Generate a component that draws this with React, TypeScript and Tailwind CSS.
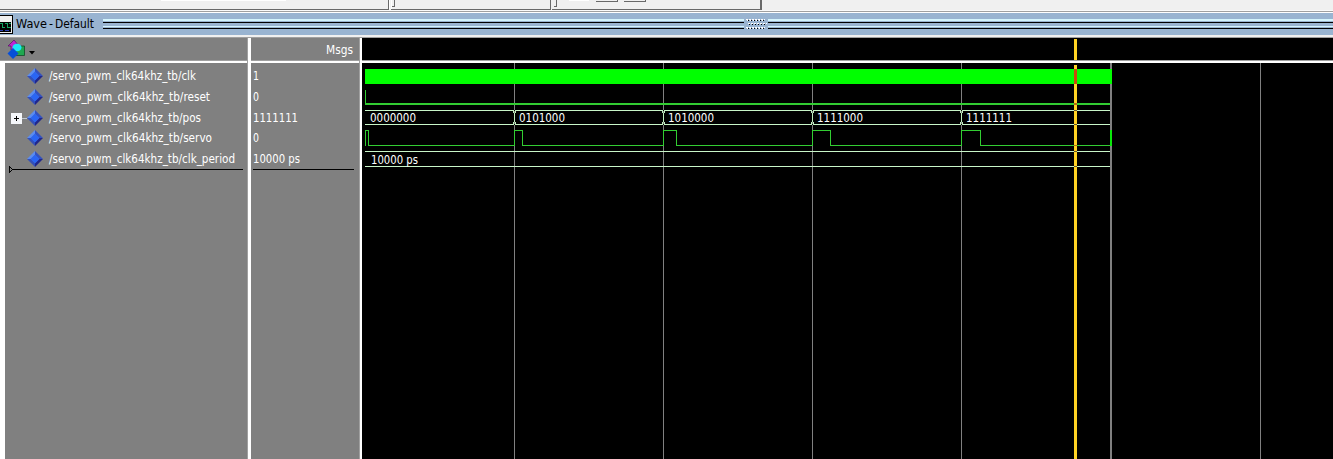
import React from "react";

const SIGNALS = [
  { name: "/servo_pwm_clk64khz_tb/clk", value: "1", nameW: 147, valueW: 6 },
  { name: "/servo_pwm_clk64khz_tb/reset", value: "0", nameW: 161, valueW: 6 },
  { name: "/servo_pwm_clk64khz_tb/pos", value: "1111111", nameW: 152, valueW: 45, bus: true },
  { name: "/servo_pwm_clk64khz_tb/servo", value: "0", nameW: 163, valueW: 6 },
  { name: "/servo_pwm_clk64khz_tb/clk_period", value: "10000 ps", nameW: 186, valueW: 47 },
];

function Label({ text, width, size = 12.5, fill = "#fff" }: { text: string; width: number; size?: number; fill?: string }) {
  return (
    <svg width={width + 2} height="18" className="block shrink-0 overflow-visible">
      <text x="0" y="13" fontSize={size} fill={fill} textLength={width} lengthAdjust="spacingAndGlyphs">{text}</text>
    </svg>
  );
}

function Diamond() {
  return (
    <svg width="16" height="16" viewBox="0 0 16 16" className="block shrink-0">
      <path d="M8 0L0 8h4l4-4z" fill="#5b8cf0" />
      <path d="M8 0l8 8h-4L8 4z" fill="#3451bd" />
      <path d="M0 8l8 8v-4L4 8z" fill="#3450b8" />
      <path d="M16 8l-8 8v-4l4-4z" fill="#20278c" />
      <path d="M8 3.500L12.500 8 8 12.500 3.500 8z" fill="#2a65f4" />
    </svg>
  );
}

function Toolbar() {
  return (
    <svg width="1333" height="13" className="block shrink-0" shapeRendering="crispEdges">
      <rect width="1333" height="13" fill="#f0f0f0" />
      <path d="M161 0h125v1h-125zM569 0h20v1h-20zM389 0h1v9h-1zM391 0h1v9h-1z" fill="#fff" />
      <path d="M0 9h388V0h1v10H0zM391 9h159V0h1v10H391zM552 9h208V0h2v10H552zM392 6h2V0h1v7h-3zM554 6h2V0h1v7h-3zM596 1h21V0h1v2h-22zM624 1h21V0h1v2h-22z" fill="#696969" />
      <rect y="10" width="1333" height="1" fill="#fafafa" />
      <rect y="11" width="1333" height="1" fill="#a0a0a0" />
      <rect y="12" width="1333" height="1" fill="#fff" />
    </svg>
  );
}

function TitleBar() {
  return (
    <div className="flex h-[22px] shrink-0 items-start bg-[#99b4d1]">
      <svg width="16" height="22" className="block shrink-0" shapeRendering="crispEdges">
        <rect y="2" width="13" height="19" fill="#000" />
        <rect y="3" width="12" height="17" fill="#f0f0f0" />
        <rect y="9" width="11" height="10" fill="#000" />
        <path d="M0 10h3v4h2v1H2v-4H0zM5 10h3v4h3v1H7v-4H5zM9 10h2v1H9z" fill="#12a060" />
        <path d="M0 17h3v1H0zM5 17h4v1H5z" fill="#2a3fb0" />
      </svg>
      <div className="flex pt-[2px]">
        <Label text="Wave" width={31} fill="#000" />
        <Label text="-" width={4} fill="#000" />
        <Label text="Default" width={39} fill="#000" />
      </div>
      <svg width="1231" height="22" className="ml-[6px] block shrink-0" shapeRendering="crispEdges">
        <path d="M1 6h641v2H1zM1 13h641v1H1zM666 6h565v2H666zM666 13h565v1H666z" fill="#d4f4fc" />
        <path d="M1 9h641v1H1zM1 15h641v1H1zM666 9h565v1H666zM666 15h565v1H666z" fill="#000" />
        {[6, 10, 14].map((y, i) => (
          <g key={y}>
            <path d={`M${644 + (i % 2) * 2} ${y + 0.5}h19`} stroke="#fff" strokeDasharray="2 1" />
            <path d={`M${645 + (i % 2) * 2} ${y + 1.5}h18`} stroke="#fff" strokeDasharray="1 2" />
            <path d={`M${646 + (i % 2)} ${y + 1.5}h18`} stroke="#000" strokeDasharray="1 2" />
          </g>
        ))}
      </svg>
    </div>
  );
}

const GRID = [152, 301, 450, 599, 898];
const BUS = ["0000000", "0101000", "1010000", "1111000", "1111111"];

function Waves() {
  return (
    <svg width="971" height="396" className="block" shapeRendering="crispEdges">
      <rect width="971" height="396" fill="#000" />
      {GRID.map((x) => <rect key={x} x={x} width="1" height="396" fill="#808080" />)}
      <rect x="748" width="2" height="396" fill="#808080" />
      <rect x="3" y="6" width="747" height="15" fill="#0f0" />
      <path d="M3 27h1v13h744v2H3z" fill="#32cd32" />
      <path d="M3 47h745v1H3zM3 61h745v1H3zM3 88h745v1H3zM3 103h745v1H3z" fill="#c8f5c8" />
      {GRID.slice(0, 4).map((x) => (
        <g key={x}>
          <rect x={x} y="47" width="1" height="1" fill="#000" />
          <rect x={x} y="61" width="1" height="1" fill="#000" />
          <path d={`M${x - 1} 47h1v3h-1zM${x + 1} 47h1v3h-1zM${x} 50h1v9h-1zM${x - 1} 59h1v3h-1zM${x + 1} 59h1v3h-1z`} fill="#c0f2c0" />
        </g>
      ))}
      <path d="M3.500 82.500V67.500h3v15h146v-15h8v15h141v-15h13v15h136v-15h18v15h131v-15h19v15h129" fill="none" stroke="#32cd32" />
      <rect x="748" y="67" width="2" height="16" fill="#0ae80a" />
      {BUS.map((t, i) => (
        <text key={t} x={8 + i * 149} y="59" fontSize="12.500" fill="#fff" textLength="46" lengthAdjust="spacingAndGlyphs">{t}</text>
      ))}
      <text x="9" y="101" fontSize="12.500" fill="#fff" textLength="47" lengthAdjust="spacingAndGlyphs">10000 ps</text>
      <rect x="712" y="2" width="3" height="394" fill="#ffd324" />
      <rect x="712" y="6" width="3" height="15" fill="#c84a0c" />
      <rect x="712" y="40" width="3" height="2" fill="#b86a10" />
      <path d="M712 47h3v1h-3zM712 61h3v1h-3zM712 88h3v1h-3zM712 103h3v1h-3z" fill="#6b5a2a" />
      <rect x="712" y="82" width="3" height="1" fill="#b86a10" />
    </svg>
  );
}

export default function App() {
  return (
    <div className="flex h-[459px] w-[1333px] flex-col overflow-hidden bg-white font-['DejaVu_Sans_Condensed','DejaVu_Sans',sans-serif] text-[12px]">
      <Toolbar />
      <TitleBar />
      <div className="h-[3px] shrink-0 border-b border-[#a0a0a0] bg-[#f0f0f0]" />
      <div className="flex h-[25px] shrink-0">
        <div className="flex h-[23px] w-[247px] items-start border-b border-[#a0a0a0] bg-[#808080]">
          <svg width="36" height="22" className="block">
            <path d="M14 2l-6 6h3v4h5V8h3z" fill="#bd25d0" stroke="#541260" strokeWidth=".7" />
            <path d="M15 8h9.500v9.500H15z" fill="#20a850" stroke="#124b28" strokeWidth=".8" />
            <ellipse cx="17" cy="9.500" rx="4.500" ry="3.800" fill="#19e8f7" />
            <path d="M13 10l5.500 5.500L13 21l-5.500-5.500z" fill="#064fd8" />
            <path d="M29 13h6l-3 3.500z" fill="#000" />
          </svg>
        </div>
        <div className="h-[25px] w-[4px] border-l border-[#a0a0a0] bg-white" />
        <div className="flex h-[23px] w-[108px] justify-end border-b border-[#a0a0a0] bg-[#808080] pt-[3px] pr-[4px]">
          <Label text="Msgs" width={27} />
        </div>
        <div className="h-[25px] w-[3px] border-l border-[#a0a0a0] bg-white" />
        <div className="flex h-[23px] flex-1 border-b border-[#a0a0a0] bg-black">
          <div className="mt-px ml-[712px] h-[21px] w-[3px] bg-[#ffd324]" />
        </div>
      </div>
      <div className="flex min-h-0 flex-1">
        <div className="ml-[5px] w-[242px] bg-[#808080] pt-[3px]">
          {SIGNALS.map((s) => (
            <div key={s.name} className="flex h-[20.7px] items-center">
              <svg width="22" height="18" className="block shrink-0" shapeRendering="crispEdges">
                {s.bus && (
                  <g>
                    <rect x="6" y="4" width="11" height="11" fill="#f4f6fa" />
                    <path d="M17 9h6v1h-6z" fill="#c0c8d0" />
                    <path d="M9 9h5v1H9zM11 7h1v5h-1z" fill="#000" />
                  </g>
                )}
              </svg>
              <Diamond />
              <div className="ml-[6px]"><Label text={s.name} width={s.nameW} /></div>
            </div>
          ))}
          <svg width="240" height="8" className="-mt-[3px] block" shapeRendering="crispEdges">
            <path d="M7 3.500h231" stroke="#000" />
            <path d="M4.500 .5v6l3-3z" fill="#808080" stroke="#000" />
          </svg>
        </div>
        <div className="w-[4px] border-l border-[#a0a0a0] bg-white" />
        <div className="w-[108px] bg-[#808080] pt-[3px] pl-[2px]">
          {SIGNALS.map((s) => (
            <div key={s.name} className="flex h-[20.7px] items-center">
              <Label text={s.value} width={s.valueW} />
            </div>
          ))}
          <div className="h-px w-[101px] bg-black" />
        </div>
        <div className="w-[3px] border-l border-[#a0a0a0] bg-white" />
        <Waves />
      </div>
    </div>
  );
}
